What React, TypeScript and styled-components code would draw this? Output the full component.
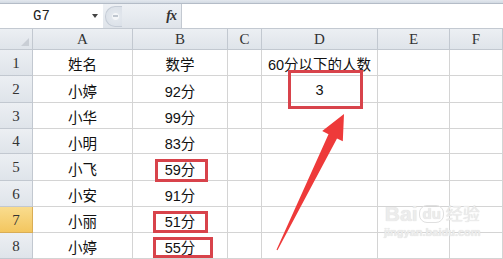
import React from "react";
import styled, { createGlobalStyle, css } from "styled-components";

const Global = createGlobalStyle`
  html, body { margin: 0; padding: 0; background: #fff; overflow: hidden; }
  #root { width: 503px; height: 259px; }
`;

const Page = styled.div`
  position: relative;
  width: 503px;
  height: 259px;
  overflow: hidden;
  background: #fff;
  font-family: "Liberation Sans", "Noto Sans CJK SC", sans-serif;
`;

const TopStrip = styled.div`
  height: 3px;
  background: linear-gradient(#e3e8ee, #d3dae3);
  border-bottom: 1px solid #b4bcc7;
`;

const FormulaBar = styled.div`
  display: flex;
  height: 24px;
  border-bottom: 1px solid #c3c9d1;
`;

const NameBox = styled.div`
  width: 103px;
  display: flex;
  align-items: center;
  background: #fff;
  position: relative;
  font-family: "Liberation Mono", "DejaVu Sans Mono", monospace;
  font-size: 14px;
  color: #222;
  padding-left: 33px;
  box-sizing: border-box;
`;

const DropArrow = styled.span`
  position: absolute;
  left: 92px;
  top: 10px;
  width: 0;
  height: 0;
  border-left: 3.5px solid transparent;
  border-right: 3.5px solid transparent;
  border-top: 4px solid #444;
`;

const Controls = styled.div`
  width: 79px;
  display: flex;
  align-items: center;
  justify-content: space-between;
  padding: 0 5px 0 2px;
  box-sizing: border-box;
  background: linear-gradient(#eef1f5, #dfe4ea);
  border-right: 1px solid #c3c9d1;
`;

const Knob = styled.div`
  width: 16px;
  height: 19px;
  border-radius: 10px 0 0 10px;
  border: 1px solid #c5ccd6;
  border-right: none;
  background: radial-gradient(circle at 60% 50%, #f4f6f8 0 3px, #e2e7ed 4px, #d8dee6 100%);
  display: flex;
  align-items: center;
  justify-content: center;
  &::after {
    content: "";
    width: 5px;
    height: 2px;
    background: #bfc6cf;
    margin-left: 3px;
  }
`;

const Fx = styled.span`
  font-family: "Liberation Serif", serif;
  font-style: italic;
  font-weight: bold;
  font-size: 14px;
  color: #333;
  letter-spacing: -1px;
`;

const FormulaInput = styled.div`
  flex: 1;
  background: #fff;
`;

const SheetWrap = styled.div`
  position: relative;
`;

const Sheet = styled.div`
  display: grid;
  grid-template-columns: 33px 100px 95px 34px 116px 72px 1fr;
  grid-template-rows: 21px 26px 27px 26px 25px 27px 26px 26px 26px;
`;

const Cell = styled.div<{ $head?: boolean; $sel?: boolean; $corner?: boolean }>`
  position: relative;
  box-sizing: border-box;
  border-right: 1px solid #d4d4d4;
  border-bottom: 1px solid #d4d4d4;
  display: flex;
  align-items: center;
  justify-content: center;
  padding-top: 2px;
  font-size: 14.5px;
  color: #111;
  white-space: nowrap;
  ${(p) =>
    p.$head &&
    css`
      background: linear-gradient(#eceff3, #dfe4ea);
      border-right-color: #c2c8d0;
      border-bottom-color: #c2c8d0;
      font-family: "Liberation Serif", "DejaVu Serif", serif;
      font-size: 15px;
      color: #333;
      padding-top: 1px;
    `}
  ${(p) =>
    p.$sel &&
    css`
      background: linear-gradient(#f9dc8e, #f3c65f);
      border-right-color: #d9ad55;
      border-bottom-color: #d9ad55;
    `}
  ${(p) =>
    p.$corner &&
    css`
      &::after {
        content: "";
        position: absolute;
        right: 3px;
        bottom: 3px;
        width: 0;
        height: 0;
        border-left: 8px solid transparent;
        border-bottom: 8px solid #c9ced5;
      }
    `}
`;

const Mark = styled.span<{ $l: number; $t: number; $w: number; $h: number }>`
  position: absolute;
  left: ${(p) => p.$l}px;
  top: ${(p) => p.$t}px;
  width: ${(p) => p.$w}px;
  height: ${(p) => p.$h}px;
  box-sizing: border-box;
  border: 3px solid #d8434b;
  pointer-events: none;
`;

const Overlay = styled.svg`
  position: absolute;
  left: 0;
  top: 0;
  pointer-events: none;
`;

const Watermark = styled.div`
  position: absolute;
  left: 384px;
  top: 174px;
  display: flex;
  flex-direction: column;
  align-items: center;
  white-space: nowrap;
  color: #ececec;
  text-shadow: 0 0 1px #d6d6d6;
  pointer-events: none;
`;

const WmTop = styled.div`
  display: flex;
  align-items: flex-end;
  font-size: 21px;
  font-weight: bold;
  line-height: 22px;
`;

const WmDu = styled.span`
  font-size: 15px;
  line-height: 16px;
  padding: 0 2px;
  border: 1px solid #e0e0e0;
  border-radius: 8px;
  margin: 0 2px 2px;
`;

const WmCn = styled.span`
  font-size: 17px;
  line-height: 20px;
  font-weight: normal;
`;

const WmUrl = styled.div`
  font-size: 11px;
  font-weight: bold;
  margin-top: 1px;
`;

const cols = ["A", "B", "C", "D", "E", "F"];

const data: string[][] = [
  ["姓名", "数学", "", "60分以下的人数", "", ""],
  ["小婷", "92分", "", "3", "", ""],
  ["小华", "99分", "", "", "", ""],
  ["小明", "83分", "", "", "", ""],
  ["小飞", "59分", "", "", "", ""],
  ["小安", "91分", "", "", "", ""],
  ["小丽", "51分", "", "", "", ""],
  ["小婷", "55分", "", "", "", ""],
];

type Box = { r: number; c: number; l: number; t: number; w: number; h: number };
const marks: Box[] = [
  { r: 1, c: 3, l: 26, t: -6, w: 75, h: 39 },
  { r: 4, c: 1, l: 22, t: 5, w: 53, h: 23 },
  { r: 6, c: 1, l: 20, t: 4, w: 55, h: 22 },
  { r: 7, c: 1, l: 20, t: 4, w: 60, h: 21 },
];

// arrow geometry (page coordinates, sheet starts at y=29)
const tip = [344, 114];
const tail = [277, 250];
const dx = tip[0] - tail[0];
const dy = tip[1] - tail[1];
const len = Math.hypot(dx, dy);
const ux = dx / len;
const uy = dy / len;
const nx = -uy;
const ny = ux;
const headLen = 25;
const bx = tip[0] - headLen * ux;
const by = tip[1] - headLen * uy;
const pt = (x: number, y: number) => `${x.toFixed(1)},${(y - 29).toFixed(1)}`;
const arrowPts = [
  pt(tip[0], tip[1]),
  pt(bx + 11 * nx, by + 11 * ny),
  pt(bx + 4.5 * nx, by + 4.5 * ny),
  pt(tail[0] + 0.6 * nx, tail[1] + 0.6 * ny),
  pt(tail[0] - 0.6 * nx, tail[1] - 0.6 * ny),
  pt(bx - 5 * nx, by - 5 * ny),
  pt(bx - 12 * nx, by - 12 * ny),
].join(" ");

export default function App() {
  return (
    <Page>
      <Global />
      <TopStrip />
      <FormulaBar>
        <NameBox>
          G7
          <DropArrow />
        </NameBox>
        <Controls>
          <Knob />
          <Fx>fx</Fx>
        </Controls>
        <FormulaInput />
      </FormulaBar>
      <SheetWrap>
        <Sheet>
          <Cell $head $corner />
          {cols.map((c) => (
            <Cell key={c} $head>
              {c}
            </Cell>
          ))}
          {data.map((row, ri) => (
            <React.Fragment key={ri}>
              <Cell $head $sel={ri === 6}>
                {ri + 1}
              </Cell>
              {row.map((v, ci) => (
                <Cell key={ci}>
                  {v}
                  {marks
                    .filter((m) => m.r === ri && m.c === ci)
                    .map((m, i) => (
                      <Mark key={i} $l={m.l} $t={m.t} $w={m.w} $h={m.h} />
                    ))}
                </Cell>
              ))}
            </React.Fragment>
          ))}
        </Sheet>
        <Overlay width="503" height="230" viewBox="0 0 503 230">
          <polygon points={arrowPts} fill="#ee3a3a" />
        </Overlay>
        <Watermark>
          <WmTop>
            Bai<WmDu>du</WmDu>
            <WmCn>经验</WmCn>
          </WmTop>
          <WmUrl>jingyan.baidu.com</WmUrl>
        </Watermark>
      </SheetWrap>
    </Page>
  );
}
